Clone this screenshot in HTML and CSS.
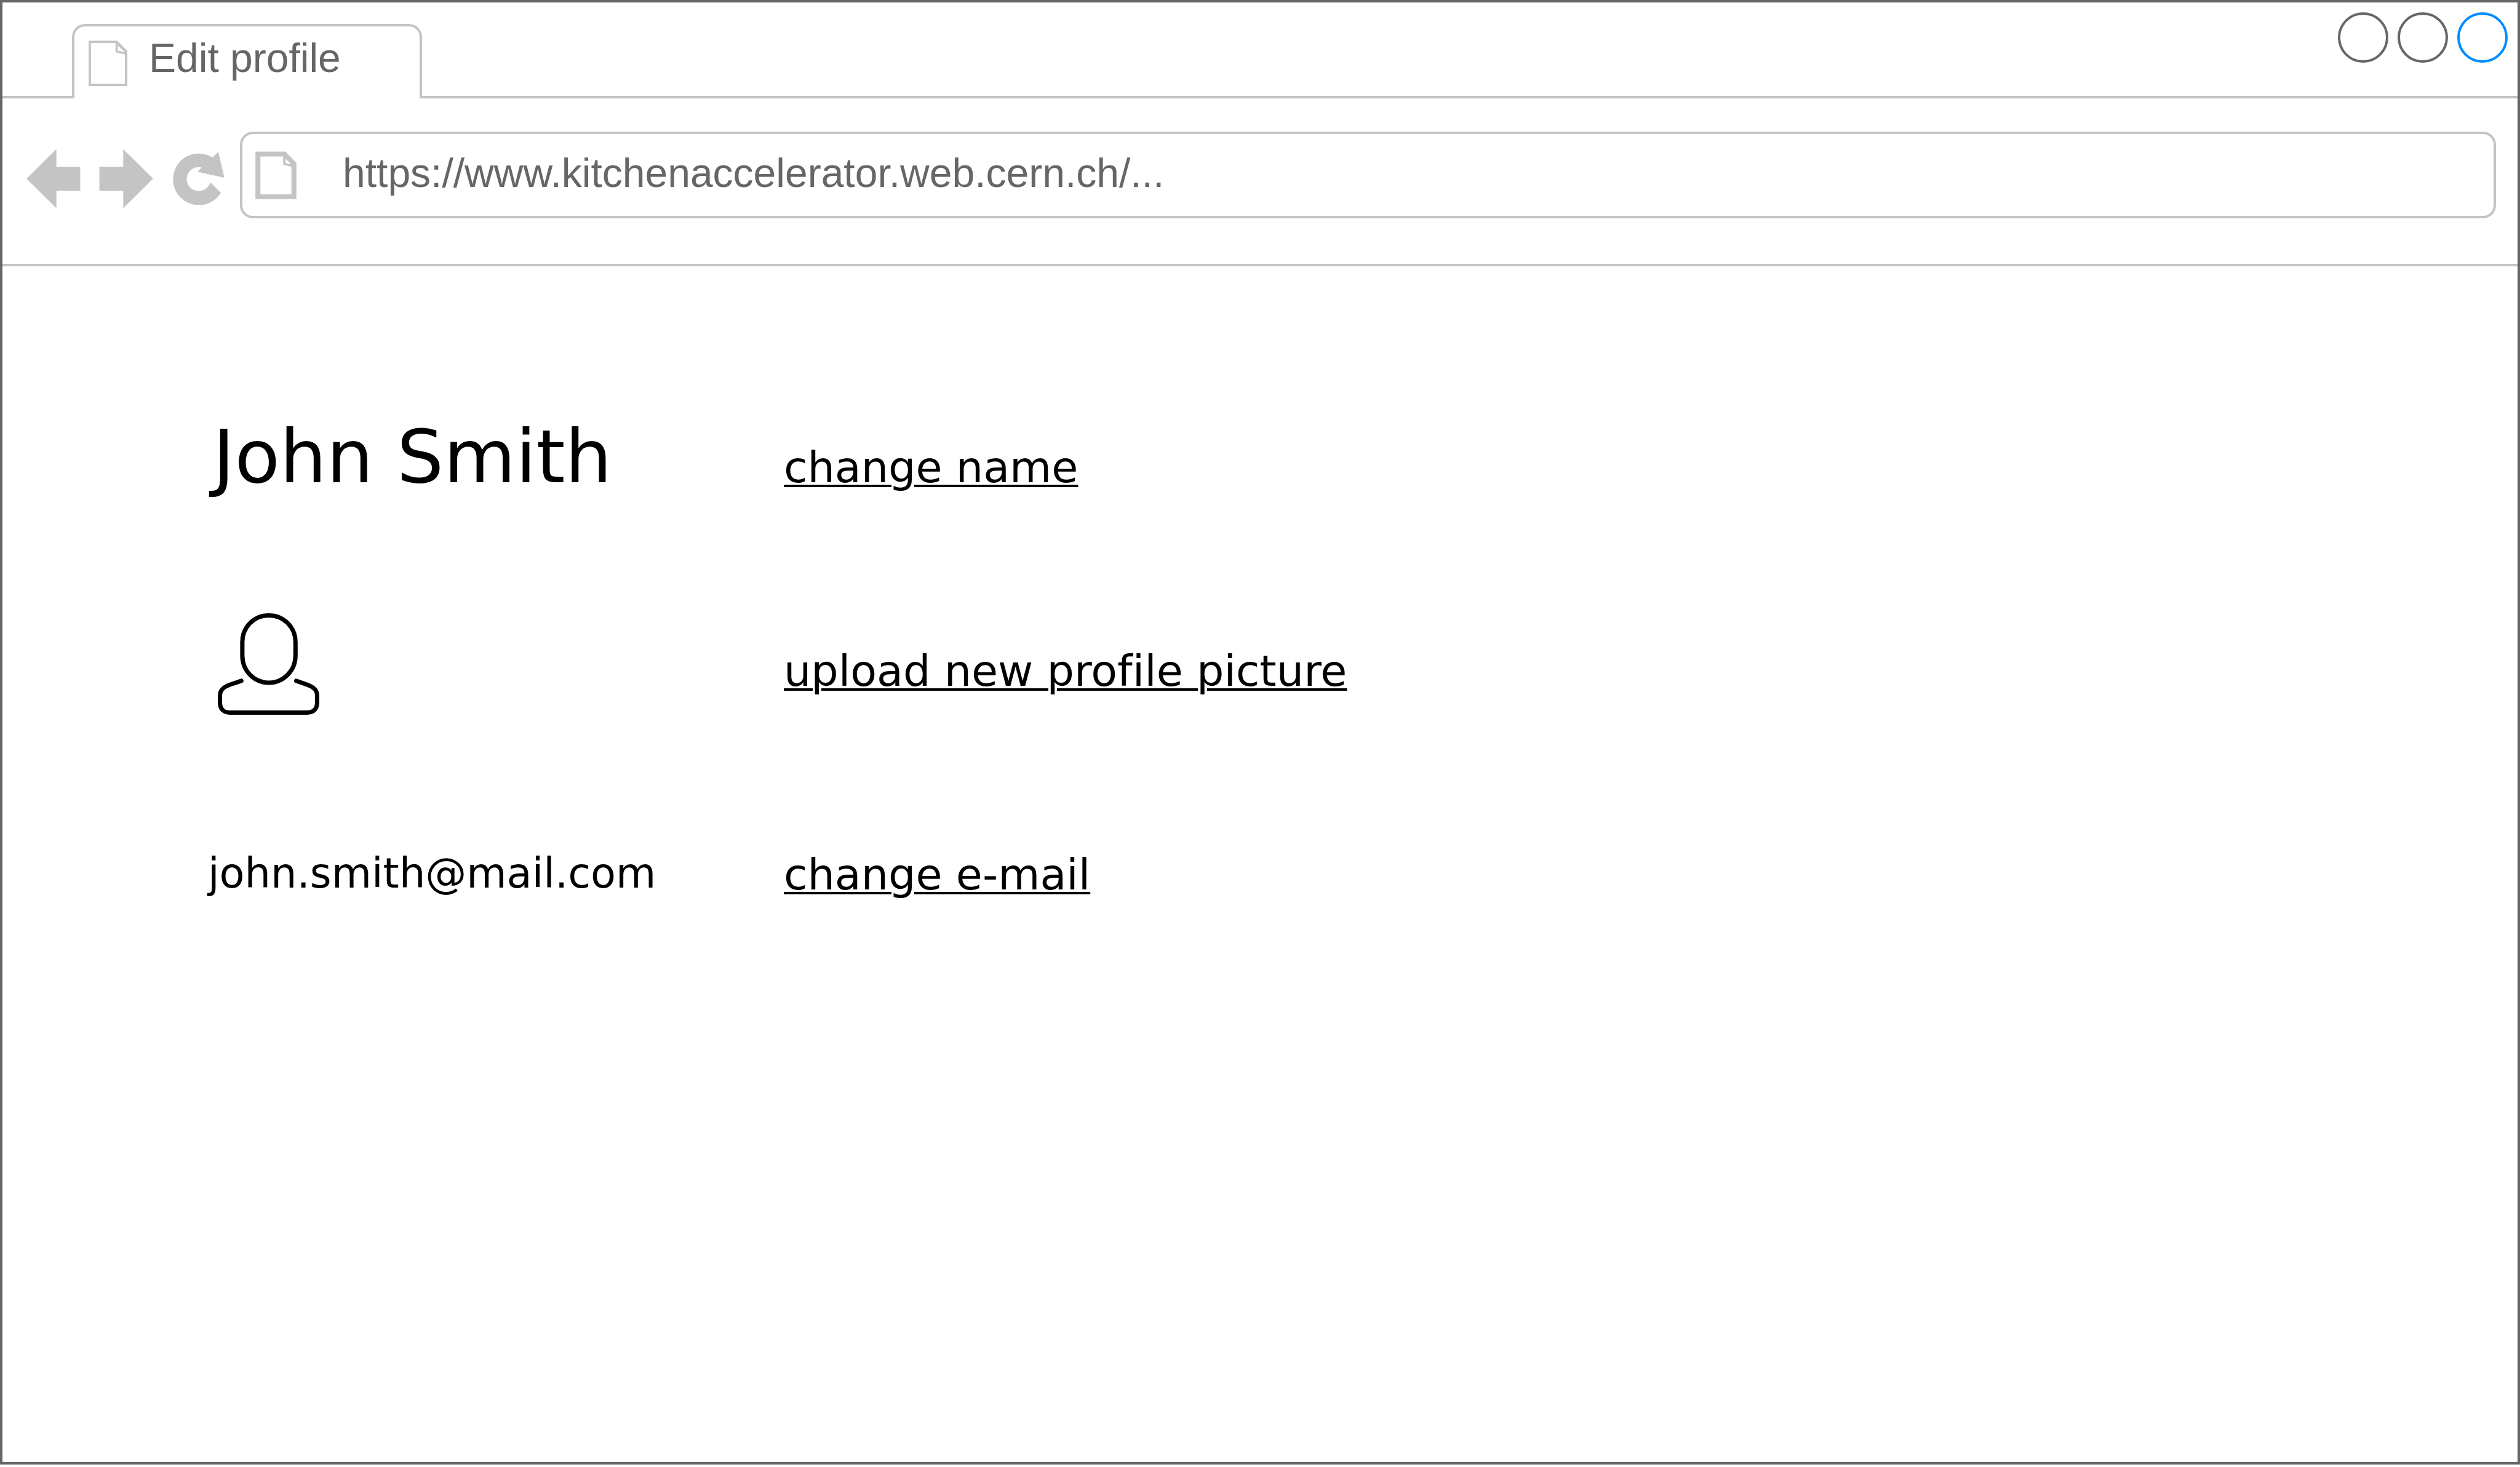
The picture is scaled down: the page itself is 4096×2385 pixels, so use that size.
FILE: index.html
```html
<!DOCTYPE html>
<html lang="en">
<head>
  <meta charset="utf-8">
  <title>Edit profile</title>
  <link rel="stylesheet" href="styles.css">
</head>
<body>
  <div class="window">
    <header class="tab-strip">
      <div class="tab">
        <svg class="tab-icon" viewBox="185 85 80 95" preserveAspectRatio="none" aria-hidden="true">
          <path fill-rule="evenodd" d="M185 85H244L265 106.500V180H185ZM190 90V175H260V114L240.600 109.500V90ZM245.300 95.400V106.200L259.400 108.800Z"/>
        </svg>
        <span class="tab-title">Edit profile</span>
      </div>
      <div class="controls">
        <button class="control" type="button" aria-label="Minimize"></button>
        <button class="control" type="button" aria-label="Maximize"></button>
        <button class="control control-close" type="button" aria-label="Close"></button>
      </div>
    </header>

    <div class="toolbar">
      <nav class="nav">
        <button class="nav-button" type="button" aria-label="Back">
          <svg class="nav-icon" viewBox="55 310 113 125"><path d="M55 372.500L117.500 310.500V347.500H167.500V397.500H117.500V434.500Z"/></svg>
        </button>
        <button class="nav-button" type="button" aria-label="Forward">
          <svg class="nav-icon" viewBox="207 310 113 125"><path d="M320 372.500L257.500 310.500V347.500H207.500V397.500H257.500V434.500Z"/></svg>
        </button>
        <button class="nav-button" type="button" aria-label="Reload">
          <svg class="nav-icon" viewBox="358 310 113 125"><path d="M443.300 328L455.600 316.700L468.200 370.700L411.700 358L420.800 349.300C418.500 348.500 416.500 348.300 414 348.300A24.700 25 0 0 0 414 398.300C426 398.300 434 392 439.400 380.700L461.100 402C450 419 433 427.700 414 427.700A53.500 54 0 0 1 414 319.700C424 319.700 434.500 322.500 443.300 328Z"/></svg>
        </button>
      </nav>
      <label class="address">
        <svg class="address-icon" viewBox="532 315 86 100" aria-hidden="true">
          <path fill-rule="evenodd" d="M532.300 315.500H594.800L617.700 338.800V414.800H532.300ZM542.600 325.800V404.800H607.400V347.200L590 342.800V325.800ZM595.200 330.800V339.500L606.600 341.500Z"/>
        </svg>
        <input class="address-input" type="text" aria-label="Address" value="https://www.kitchenaccelerator.web.cern.ch/...">
      </label>
    </div>

    <main class="profile">
      <section class="row">
        <h1 class="name">John Smith</h1>
        <a class="link" href="#name">change name</a>
      </section>
      <section class="row">
        <div class="avatar">
          <svg class="avatar-icon" viewBox="0 0 211 211" role="img" aria-label="Profile picture">
            <path d="M106 4.500C136 4.500 161.500 28 161.500 60V88C161.500 120 136 144.500 106 144.500S51 120 51 88V60C51 28 76 4.500 106 4.500Z"/>
            <path d="M49 140.500L24 149C11 154 4.500 160 4.500 171V185C4.500 199 12 206.500 25 206.500H186C199 206.500 206.500 199 206.500 185V171C206.500 160 200 154 187 149L163 140.500"/>
          </svg>
        </div>
        <a class="link" href="#picture">upload new profile picture</a>
      </section>
      <section class="row">
        <p class="email">john.smith@mail.com</p>
        <a class="link" href="#email">change e-mail</a>
      </section>
    </main>
  </div>
</body>
</html>
```

FILE: styles.css
```css
* {
  box-sizing: border-box;
}

body {
  margin: 0;
  padding-bottom: 4px;
  min-height: 100vh;
  display: flex;
  background: #fff;
  color: #000;
  font-family: Verdana, "DejaVu Sans", sans-serif;
  font-variant-ligatures: none;
}

.window {
  flex: 1;
  min-width: 0;
  border: 4px solid #666;
}

/* Tab strip */

.tab-strip {
  display: flex;
  justify-content: space-between;
  align-items: flex-start;
  padding: 0 16px 0 113px;
  border-bottom: 4px solid #c4c4c4;
}

.tab {
  display: flex;
  align-items: flex-start;
  gap: 35px;
  width: 569px;
  height: 121px;
  margin-top: 35px;
  margin-bottom: -4px;
  padding: 23px 23px 0;
  background: #fff;
  border: 4px solid #c4c4c4;
  border-bottom: 0;
  border-radius: 21px 21px 0 0;
}

.tab-icon {
  flex: none;
  width: 63px;
  height: 74px;
  fill: #c4c4c4;
}

.tab-title {
  color: #666;
  font: 66px/56px Arial, "Liberation Sans", sans-serif;
}

.controls {
  display: flex;
  gap: 15px;
  padding-top: 16px;
}

.control {
  width: 82px;
  height: 82px;
  padding: 0;
  background: none;
  border: 4px solid #666;
  border-radius: 50%;
}

.control-close {
  border-color: #008cff;
}

/* Toolbar */

.toolbar {
  display: flex;
  align-items: flex-start;
  gap: 23px;
  padding: 54px 35px 74px 39px;
  border-bottom: 4px solid #c4c4c4;
}

.nav {
  display: flex;
  gap: 30px;
  padding-top: 28px;
}

.nav-button {
  padding: 0;
  background: none;
  border: 0;
}

.nav-icon {
  display: block;
  width: 88px;
  height: 97px;
  fill: #c4c4c4;
}

.address {
  flex: 1;
  display: flex;
  align-items: center;
  gap: 75px;
  height: 141px;
  padding: 0 21px;
  border: 4px solid #c4c4c4;
  border-radius: 21px;
}

.address-icon {
  flex: none;
  width: 67px;
  height: 78px;
  fill: #c4c4c4;
}

.address-input {
  flex: 1;
  min-width: 0;
  height: 100%;
  padding: 0 0 8px;
  background: none;
  border: 0;
  outline: 0;
  color: #666;
  font: 66px Arial, "Liberation Sans", sans-serif;
}

/* Profile */

.profile {
  padding: 161px 0 0 334px;
}

.row {
  display: grid;
  grid-template-columns: 936px 1fr;
  align-items: center;
  justify-items: start;
  height: 331px;
}

.name {
  margin: 0;
  padding: 0 0 34px 8px;
  font-size: 120px;
  font-weight: 400;
}

.avatar {
  padding: 0 0 22px 16px;
}

.avatar-icon {
  display: block;
  width: 165px;
  height: 165px;
  fill: none;
  stroke: #000;
  stroke-width: 9;
  stroke-linecap: round;
}

.email {
  margin: 0;
  padding-bottom: 4px;
  font-size: 67px;
}

.link {
  color: inherit;
  font-size: 70px;
  text-decoration-thickness: 4px;
  text-underline-offset: 4px;
}
```
